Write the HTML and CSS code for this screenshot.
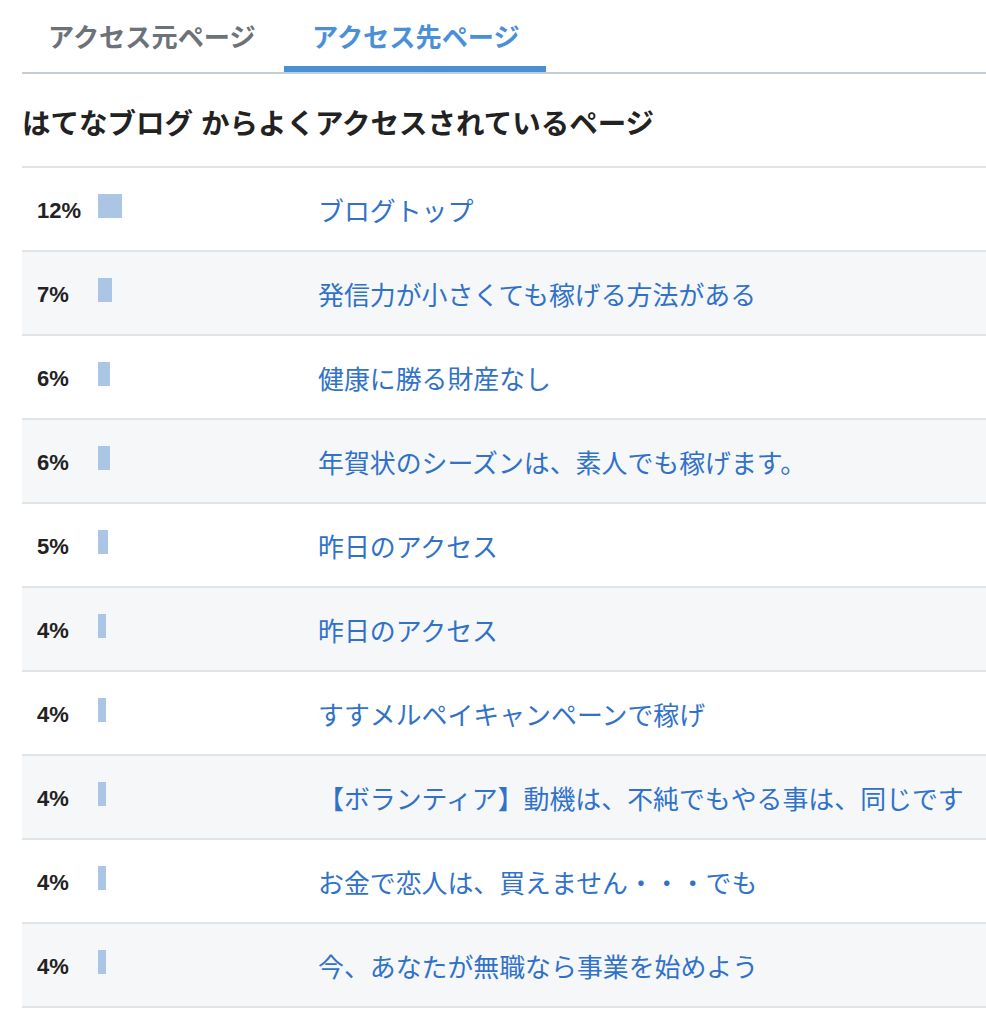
FILE: index.html
```html
<!DOCTYPE html>
<html lang="ja">
<head>
    <meta charset="UTF-8">
    <meta name="viewport" content="width=device-width, initial-scale=1.0">
    <title>アクセス先ページ</title>
    <link rel="stylesheet" href="styles.css">
</head>
<body>

    <div class="page">
        <!-- Tabs -->
        <div class="tabs">
            <a href="#" class="tab">アクセス元ページ</a>
            <a href="#" class="tab active">アクセス先ページ</a>
        </div>

        <h2 class="section-title">はてなブログ からよくアクセスされているページ</h2>

        <table class="ranking">
            <tr>
                <td class="pct"><span class="num">12%</span><span class="bar" style="width: 24px"></span></td>
                <td class="page-title"><a href="#">ブログトップ</a></td>
            </tr>
            <tr>
                <td class="pct"><span class="num">7%</span><span class="bar" style="width: 14px"></span></td>
                <td class="page-title"><a href="#">発信力が小さくても稼げる方法がある</a></td>
            </tr>
            <tr>
                <td class="pct"><span class="num">6%</span><span class="bar" style="width: 12px"></span></td>
                <td class="page-title"><a href="#">健康に勝る財産なし</a></td>
            </tr>
            <tr>
                <td class="pct"><span class="num">6%</span><span class="bar" style="width: 12px"></span></td>
                <td class="page-title"><a href="#">年賀状のシーズンは、素人でも稼げます。</a></td>
            </tr>
            <tr>
                <td class="pct"><span class="num">5%</span><span class="bar" style="width: 10px"></span></td>
                <td class="page-title"><a href="#">昨日のアクセス</a></td>
            </tr>
            <tr>
                <td class="pct"><span class="num">4%</span><span class="bar" style="width: 8px"></span></td>
                <td class="page-title"><a href="#">昨日のアクセス</a></td>
            </tr>
            <tr>
                <td class="pct"><span class="num">4%</span><span class="bar" style="width: 8px"></span></td>
                <td class="page-title"><a href="#">すすメルペイキャンペーンで稼げ</a></td>
            </tr>
            <tr>
                <td class="pct"><span class="num">4%</span><span class="bar" style="width: 8px"></span></td>
                <td class="page-title"><a href="#">【ボランティア】動機は、不純でもやる事は、同じです</a></td>
            </tr>
            <tr>
                <td class="pct"><span class="num">4%</span><span class="bar" style="width: 8px"></span></td>
                <td class="page-title"><a href="#">お金で恋人は、買えません・・・でも</a></td>
            </tr>
            <tr>
                <td class="pct"><span class="num">4%</span><span class="bar" style="width: 8px"></span></td>
                <td class="page-title"><a href="#">今、あなたが無職なら事業を始めよう</a></td>
            </tr>
        </table>
    </div>

</body>
</html>
```

FILE: styles.css
```css
body {
    font-family: 'Liberation Sans', 'Noto Sans CJK JP', sans-serif;
    background-color: #ffffff;
    color: #222222;
    margin: 0;
    padding: 0;
}

.page {
    padding-left: 22px;
}

/* Tabs */
.tabs {
    display: flex;
    border-bottom: 2px solid #c5ced6;
}

.tab {
    display: block;
    box-sizing: border-box;
    width: 262px;
    padding: 19px 0 9px 26px;
    line-height: 38px;
    font-size: 26.2px;
    font-weight: bold;
    color: #6c7277;
    text-decoration: none;
    white-space: nowrap;
    border-bottom: 6px solid transparent;
}

.tab.active {
    color: #4a90d9;
    border-bottom-color: #4a90d9;
    padding-left: 28px;
}

/* Heading */
.section-title {
    font-size: 28.5px;
    line-height: 40px;
    font-weight: bold;
    color: #222222;
    margin: 30px 0 22px;
}

/* Ranking table */
.ranking {
    width: 100%;
    border-collapse: collapse;
}

.ranking tr {
    border-top: 2px solid #dfe4e9;
    border-bottom: 2px solid #dfe4e9;
}

.ranking tr:nth-child(even) {
    background-color: #f5f7f9;
}

.ranking td {
    height: 82px;
    padding: 0;
    vertical-align: middle;
}

.ranking .pct {
    width: 281px;
    padding-left: 15px;
    white-space: nowrap;
}

.pct .num {
    display: inline-block;
    width: 61px;
    font-size: 22px;
    font-weight: bold;
    color: #222222;
}

.pct .bar {
    display: inline-block;
    height: 24px;
    background-color: #abc6e4;
}

.page-title a {
    font-size: 25.9px;
    color: #3172c8;
    text-decoration: none;
    white-space: nowrap;
}
```
